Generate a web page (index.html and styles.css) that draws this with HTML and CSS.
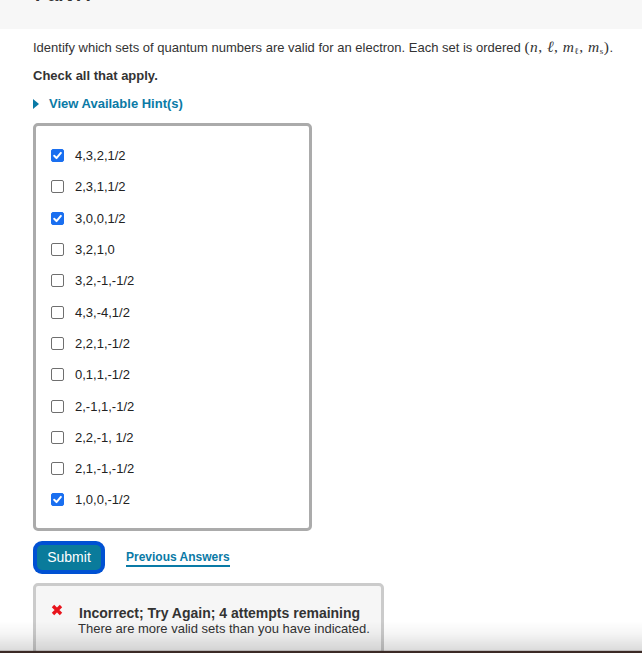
FILE: index.html
```html
<!DOCTYPE html>
<html>
<head>
<meta charset="utf-8">
<link rel="stylesheet" href="styles.css">
</head>
<body>
<div class="topbar"><h2 class="part-title">Part A</h2></div>
<main class="content">
  <p class="intro">Identify which sets of quantum numbers are valid for an electron. Each set is ordered <span class="math">(<i>n</i>, <i>ℓ</i>, <i>m</i><sub>ℓ</sub>, <i>m</i><sub>s</sub>)</span>.</p>
  <p class="instr">Check all that apply.</p>
  <div class="hint"><span class="tri"></span><span class="hint-text">View Available Hint(s)</span></div>

  <ul class="choices">
    <li class="choice"><span class="cb checked"><svg viewBox="0 0 13 13" width="13" height="13"><path d="M3.2 6.8 L5.5 9.1 L9.9 3.9" fill="none" stroke="#fff" stroke-width="2" stroke-linecap="round" stroke-linejoin="round"/></svg></span><span class="lbl">4,3,2,1/2</span></li>
    <li class="choice"><span class="cb"></span><span class="lbl">2,3,1,1/2</span></li>
    <li class="choice"><span class="cb checked"><svg viewBox="0 0 13 13" width="13" height="13"><path d="M3.2 6.8 L5.5 9.1 L9.9 3.9" fill="none" stroke="#fff" stroke-width="2" stroke-linecap="round" stroke-linejoin="round"/></svg></span><span class="lbl">3,0,0,1/2</span></li>
    <li class="choice"><span class="cb"></span><span class="lbl">3,2,1,0</span></li>
    <li class="choice"><span class="cb"></span><span class="lbl">3,2,-1,-1/2</span></li>
    <li class="choice"><span class="cb"></span><span class="lbl">4,3,-4,1/2</span></li>
    <li class="choice"><span class="cb"></span><span class="lbl">2,2,1,-1/2</span></li>
    <li class="choice"><span class="cb"></span><span class="lbl">0,1,1,-1/2</span></li>
    <li class="choice"><span class="cb"></span><span class="lbl">2,-1,1,-1/2</span></li>
    <li class="choice"><span class="cb"></span><span class="lbl">2,2,-1, 1/2</span></li>
    <li class="choice"><span class="cb"></span><span class="lbl">2,1,-1,-1/2</span></li>
    <li class="choice"><span class="cb checked"><svg viewBox="0 0 13 13" width="13" height="13"><path d="M3.2 6.8 L5.5 9.1 L9.9 3.9" fill="none" stroke="#fff" stroke-width="2" stroke-linecap="round" stroke-linejoin="round"/></svg></span><span class="lbl">1,0,0,-1/2</span></li>
  </ul>

  <div class="actions">
    <button class="submit"><span class="submit-inner">Submit</span></button>
    <a class="prev">Previous Answers</a>
  </div>

  <div class="feedback">
    <svg class="xmark" viewBox="0 0 12 12" width="12" height="12"><path d="M2 2 L10 10 M10 2 L2 10" stroke="#e8141c" stroke-width="3.4" stroke-linecap="butt"/></svg>
    <div class="fb-text">
      <div class="fb-title">Incorrect; Try Again; 4 attempts remaining</div>
      <div class="fb-msg">There are more valid sets than you have indicated.</div>
    </div>
  </div>
</main>
<div class="bottom-shade"></div>
</body>
</html>
```

FILE: styles.css
```css
html, body {
  margin: 0;
  padding: 0;
  background: #fff;
  height: 653px;
  overflow: hidden;
}
body {
  font-family: "Liberation Sans", Arial, Helvetica, sans-serif;
  color: #333;
}
.topbar {
  height: 29px;
  background: #f7f7f7;
  overflow: hidden;
}
.part-title {
  margin: -15px 0 0 35px;
  font-size: 19px;
  line-height: 20px;
  font-weight: bold;
  color: #333;
}
.content {
  padding-left: 33px;
}
.intro {
  margin: 10px 0 0;
  font-size: 13px;
  line-height: 15px;
  color: #333;
  white-space: nowrap;
}
.math {
  font-family: "Liberation Serif", "DejaVu Serif", serif;
  font-size: 15.5px;
  letter-spacing: 0.5px;
}
.math sub {
  font-size: 9px;
  vertical-align: -2px;
}
.instr {
  margin: 9px 0 0;
  font-size: 13px;
  line-height: 15px;
  font-weight: bold;
  color: #333;
}
.hint {
  margin-top: 13px;
  display: flex;
  align-items: center;
  height: 15px;
}
.tri {
  width: 0;
  height: 0;
  border-top: 5px solid transparent;
  border-bottom: 5px solid transparent;
  border-left: 6px solid #0a7aa6;
  margin-right: 10px;
}
.hint-text {
  font-size: 13px;
  font-weight: bold;
  color: #0a7aa6;
}
.choices {
  list-style: none;
  box-sizing: border-box;
  margin: 12px 0 0;
  padding: 14px 0 12px 15px;
  width: 279px;
  border: 3px solid #ababab;
  border-radius: 5px;
}
.choice {
  display: flex;
  align-items: center;
  height: 31.3px;
}
.cb {
  width: 11px;
  height: 11px;
  border: 1px solid #6f6f6f;
  border-radius: 2px;
  background: #fff;
  display: flex;
  align-items: center;
  justify-content: center;
  margin-right: 11px;
}
.cb.checked {
  border-color: #1a6ff0;
  background: #1a6ff0;
}
.cb svg {
  display: block;
  flex: none;
}
.lbl {
  font-size: 13px;
  color: #222;
}
.actions {
  margin-top: 10px;
  display: flex;
  align-items: center;
}
.submit {
  width: 72px;
  height: 33px;
  padding: 4px;
  margin: 0;
  border: none;
  border-radius: 9px;
  background: #0051d3;
  display: flex;
}
.submit-inner {
  flex: 1;
  border-radius: 5px;
  background: #0a7b9b;
  color: #fff;
  font-family: "Liberation Sans", Arial, sans-serif;
  font-size: 14px;
  display: flex;
  align-items: center;
  justify-content: center;
}
.prev {
  margin-left: 21px;
  font-size: 12px;
  font-weight: bold;
  color: #0a7aa6;
  border-bottom: 2px solid #0a7aa6;
  padding-bottom: 1px;
  line-height: 14px;
  margin-top: 3px;
}
.feedback {
  margin-top: 9px;
  box-sizing: border-box;
  width: 351px;
  height: 72px;
  border: 3px solid #cbcbcb;
  border-radius: 5px;
  background: #f6f6f6;
  display: flex;
  align-items: flex-start;
}
.xmark {
  margin: 18px 0 0 15px;
  flex: none;
}
.fb-text {
  margin: 19px 0 0 16px;
}
.fb-title {
  font-size: 14px;
  font-weight: bold;
  color: #333;
  line-height: 16px;
}
.fb-msg {
  font-size: 13px;
  color: #333;
  line-height: 15px;
  margin-left: -1px;
}
.bottom-shade {
  position: fixed;
  left: 0;
  right: 0;
  bottom: 0;
  height: 32px;
  background: linear-gradient(to bottom, rgba(0,0,0,0) 0%, rgba(0,0,0,0.04) 40%, rgba(0,0,0,0.14) 92%, #3b2a26 93%, #3b2a26 100%);
  pointer-events: none;
}
```
